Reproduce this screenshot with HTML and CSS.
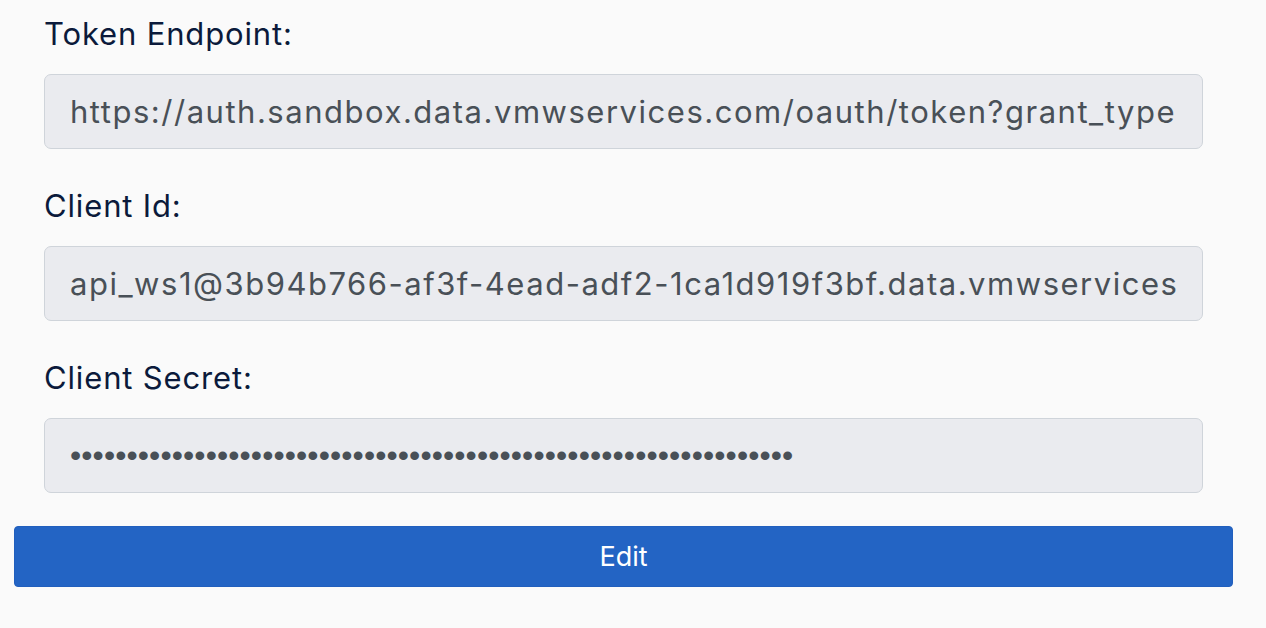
FILE: index.html
```html
<!DOCTYPE html>
<html>
<head>
<meta charset="utf-8">
<link rel="stylesheet" href="styles.css">
</head>
<body>
<div class="panel">
  <form class="form">
    <div class="fields">
      <div class="field">
        <label class="label" for="tok">Token Endpoint:</label>
        <input class="control" id="tok" type="text" readonly value="https://auth.sandbox.data.vmwservices.com/oauth/token?grant_type=client_credentials">
      </div>
      <div class="field">
        <label class="label" for="cid">Client Id:</label>
        <input class="control" id="cid" type="text" readonly value="api_ws1@3b94b766-af3f-4ead-adf2-1ca1d919f3bf.data.vmwservices.com">
      </div>
      <div class="field">
        <label class="label" for="sec">Client Secret:</label>
        <input class="control secret" id="sec" type="password" readonly value="aaaaaaaaaaaaaaaaaaaaaaaaaaaaaaaaaaaaaaaaaaaaaaaaaaaaaaaaaaaaaaaa">
      </div>
    </div>
    <button class="btn" type="button">Edit</button>
  </form>
</div>
</body>
</html>
```
FILE: styles.css
```css
html, body {
  margin: 0;
  padding: 0;
  background: #fafafa;
}
body {
  font-family: Inter, "Noto Sans", sans-serif;
  width: 1266px;
  height: 628px;
  overflow: hidden;
}
.panel {
  padding: 14px 33px 0 14px;
}
.form {
  display: flex;
  flex-direction: column;
  gap: 33px;
}
.fields {
  display: flex;
  flex-direction: column;
  gap: 37px;
  padding: 0 30px;
}
.field {
  display: flex;
  flex-direction: column;
  gap: 20px;
}
.label {
  font-size: 31px;
  line-height: 40px;
  height: 40px;
  color: #0b1a3b;
  font-weight: 400;
  letter-spacing: 0.85px;
}
.control {
  box-sizing: border-box;
  height: 75px;
  width: 100%;
  margin: 0;
  padding: 0 25px;
  border: 1px solid #cfd4da;
  border-radius: 7px;
  background: #eaebef;
  color: #495057;
  font-family: Inter, "Noto Sans", sans-serif;
  font-size: 31px;
  letter-spacing: 1.52px;
  outline: none;
}
.control.secret {
  font-family: "Liberation Sans", Arial, sans-serif;
  font-size: 32px;
  letter-spacing: 0.1px;
  color: #495057;
}
.btn {
  box-sizing: border-box;
  height: 61px;
  width: 100%;
  border: 1px solid #215fbd;
  border-radius: 4px;
  background: #2364c4;
  color: #ffffff;
  font-family: Inter, "Noto Sans", sans-serif;
  font-size: 27px;
  padding: 0;
}
```
